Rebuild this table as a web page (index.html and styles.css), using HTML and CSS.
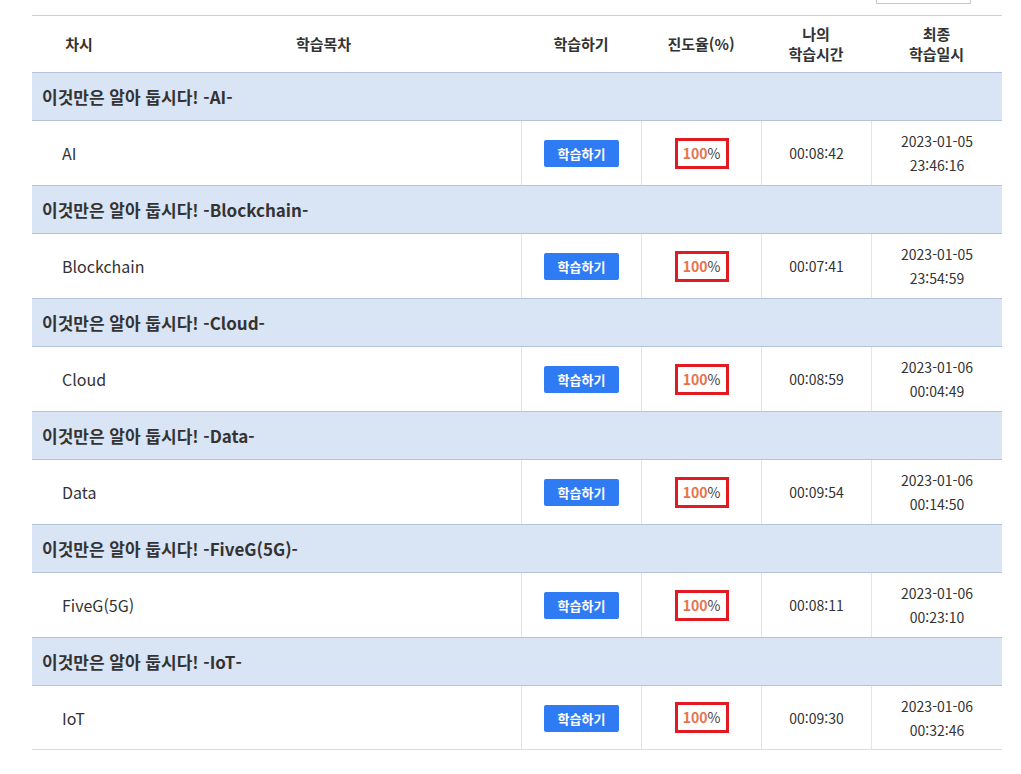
FILE: index.html
```html
<!DOCTYPE html>
<html lang="ko">
<head>
<meta charset="utf-8">
<title>학습목차</title>
<link rel="stylesheet" href="styles.css">
</head>
<body>
<div class="page">
  <div class="toolbar"><div class="select"></div></div>
  <table class="course">
    <colgroup>
      <col class="c-no"><col class="c-title"><col class="c-study"><col class="c-rate"><col class="c-time"><col class="c-date">
    </colgroup>
    <thead>
      <tr>
        <th>차시</th>
        <th>학습목차</th>
        <th>학습하기</th>
        <th>진도율(%)</th>
        <th>나의<br>학습시간</th>
        <th>최종<br>학습일시</th>
      </tr>
    </thead>
    <tbody>
      <tr class="cat"><td colspan="6">이것만은 알아 둡시다! -AI-</td></tr>
      <tr class="item">
        <td colspan="2" class="title">AI</td>
        <td class="cell"><button class="btn">학습하기</button></td>
        <td class="cell"><span class="rate"><b>100</b>%</span></td>
        <td class="cell">00:08:42</td>
        <td class="cell">2023-01-05<br>23:46:16</td>
      </tr>
      <tr class="cat"><td colspan="6">이것만은 알아 둡시다! -Blockchain-</td></tr>
      <tr class="item">
        <td colspan="2" class="title">Blockchain</td>
        <td class="cell"><button class="btn">학습하기</button></td>
        <td class="cell"><span class="rate"><b>100</b>%</span></td>
        <td class="cell">00:07:41</td>
        <td class="cell">2023-01-05<br>23:54:59</td>
      </tr>
      <tr class="cat"><td colspan="6">이것만은 알아 둡시다! -Cloud-</td></tr>
      <tr class="item">
        <td colspan="2" class="title">Cloud</td>
        <td class="cell"><button class="btn">학습하기</button></td>
        <td class="cell"><span class="rate"><b>100</b>%</span></td>
        <td class="cell">00:08:59</td>
        <td class="cell">2023-01-06<br>00:04:49</td>
      </tr>
      <tr class="cat"><td colspan="6">이것만은 알아 둡시다! -Data-</td></tr>
      <tr class="item">
        <td colspan="2" class="title">Data</td>
        <td class="cell"><button class="btn">학습하기</button></td>
        <td class="cell"><span class="rate"><b>100</b>%</span></td>
        <td class="cell">00:09:54</td>
        <td class="cell">2023-01-06<br>00:14:50</td>
      </tr>
      <tr class="cat"><td colspan="6">이것만은 알아 둡시다! -FiveG(5G)-</td></tr>
      <tr class="item">
        <td colspan="2" class="title">FiveG(5G)</td>
        <td class="cell"><button class="btn">학습하기</button></td>
        <td class="cell"><span class="rate"><b>100</b>%</span></td>
        <td class="cell">00:08:11</td>
        <td class="cell">2023-01-06<br>00:23:10</td>
      </tr>
      <tr class="cat"><td colspan="6">이것만은 알아 둡시다! -IoT-</td></tr>
      <tr class="item last">
        <td colspan="2" class="title">IoT</td>
        <td class="cell"><button class="btn">학습하기</button></td>
        <td class="cell"><span class="rate"><b>100</b>%</span></td>
        <td class="cell">00:09:30</td>
        <td class="cell">2023-01-06<br>00:32:46</td>
      </tr>
    </tbody>
  </table>
</div>
</body>
</html>
```
FILE: styles.css
```css
* { box-sizing: border-box; }
html, body {
  margin: 0;
  padding: 0;
  background: #fff;
}
body {
  font-family: "Noto Sans CJK KR", "Noto Sans", sans-serif;
  color: #333;
}
.page {
  padding: 0 19px 0 32px;
}
.toolbar {
  height: 15px;
  display: flex;
  justify-content: flex-end;
  align-items: flex-start;
  padding-right: 31px;
}
.select {
  width: 95px;
  height: 4px;
  border: 1px solid #c8c8c8;
  border-top: none;
}
.course {
  width: 970px;
  border-collapse: separate;
  border-spacing: 0;
  table-layout: fixed;
  border-top: 1px solid #cfcfcf;
}
.c-no { width: 94px; }
.c-title { width: 395px; }
.c-study { width: 120px; }
.c-rate { width: 120px; }
.c-time { width: 110px; }
.c-date { width: 131px; }

.course th {
  height: 56px;
  padding: 0;
  font-size: 15px;
  font-weight: 700;
  line-height: 20px;
  color: #333;
  text-align: center;
  vertical-align: middle;
}
.cat td {
  height: 49px;
  padding: 0 0 1px 10px;
  background: #d9e4f5;
  border-top: 1px solid #b4c3da;
  border-bottom: 1px solid #b4c3da;
  font-size: 17px;
  font-weight: 700;
  color: #333;
}
.item td {
  height: 64px;
  padding: 0;
  font-size: 14px;
  line-height: 24px;
  vertical-align: middle;
}
.item .title {
  padding-left: 30px;
  font-size: 16px;
  color: #333;
}
.item .cell {
  text-align: center;
  border-left: 1px solid #e4e4e4;
}
.item.last td {
  border-bottom: 1px solid #dcdcdc;
}
.btn {
  display: inline-block;
  width: 75px;
  height: 27px;
  border: none;
  border-radius: 2px;
  background: #2f7bf3;
  color: #fff;
  font-family: inherit;
  font-size: 13px;
  font-weight: 700;
  line-height: 27px;
  padding: 0;
  margin-top: 1px;
}
.rate {
  display: inline-block;
  width: 54px;
  height: 31px;
  border: 3px solid #e21a22;
  font-size: 14px;
  line-height: 25px;
  color: #444;
}
.rate b {
  color: #e8734a;
  font-weight: 700;
}
```
